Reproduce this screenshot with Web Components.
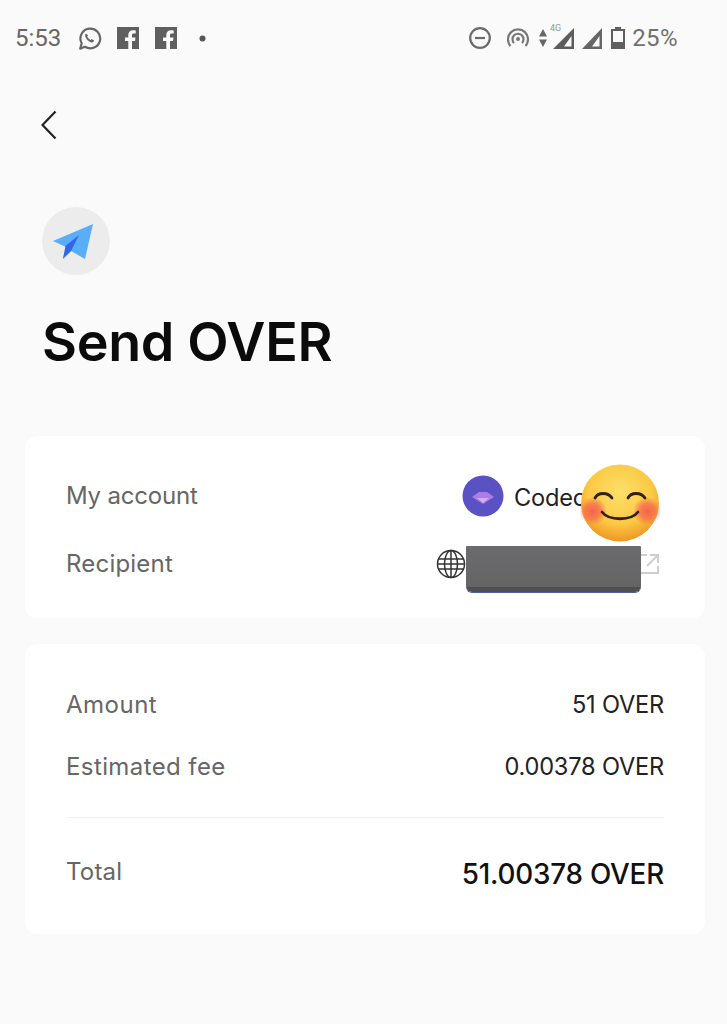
<!DOCTYPE html>
<html><head><meta charset="utf-8"><style>
html,body{margin:0;padding:0;background:#fafafa}
body{width:727px;height:1024px;overflow:hidden;font-family:Inter,"Liberation Sans",sans-serif}
</style></head><body>
<template id="t-status"><style>
:host{display:flex;align-items:center;height:40px;padding:18px 49px 0 15px;color:#666;font:400 24px/40px Roboto,sans-serif}
.l,.r{display:flex;align-items:center}
.r{margin-left:auto}
svg{display:block;flex:none}
</style>
<div class="l"><span>5:53</span>
<svg style="margin-left:16px" width="25" height="25" viewBox="0 0 25 25"><path d="M3.2 22.6l1.5-5.300A9.900 9.900 0 1 1 8 20.800z" fill="none" stroke="#666" stroke-width="2.200" stroke-linejoin="round"/><path d="M9 7.600c-1.400 1-1.200 3 .4 5.200 1.700 2.300 3.800 3.900 5.600 3.600 1.200-.2 2-1 2.100-2l-2.500-1.500-1 1.100c-1.400-.5-2.800-2-3.400-3.400l.9-1z" fill="#666"/></svg>
<svg style="margin-left:15px" width="22" height="22" viewBox="0 0 22 22"><path fill="#5f5f5f" d="M0 0h22v22H15v-8h3l.5-3.500H15V8.300c0-1 .4-1.700 1.800-1.700h1.900V3.400c-.9-.1-1.800-.2-2.700-.2-2.800 0-4.700 1.700-4.700 4.800v2.500H8V14h3.300v8H0z"/></svg>
<svg style="margin-left:16px" width="22" height="22" viewBox="0 0 22 22"><path fill="#5f5f5f" d="M0 0h22v22H15v-8h3l.5-3.500H15V8.300c0-1 .4-1.700 1.800-1.700h1.900V3.400c-.9-.1-1.800-.2-2.700-.2-2.800 0-4.700 1.700-4.700 4.800v2.500H8V14h3.300v8H0z"/></svg>
<svg style="margin-left:22px" width="7" height="7" viewBox="0 0 7 7"><circle cx="3.500" cy="3.500" r="3" fill="#555"/></svg>
</div>
<div class="r">
<svg width="22" height="22" viewBox="0 0 22 22"><circle cx="11" cy="11" r="9.800" fill="none" stroke="#6a6a6a" stroke-width="2.200"/><rect x="6" y="9.900" width="10" height="2.200" fill="#6a6a6a"/></svg>
<svg style="margin-left:16px" width="22" height="20" viewBox="0 0 22 20"><g fill="none" stroke="#777" stroke-width="2.200"><path d="M3.500 18a10 10 0 1 1 15 0"/><path d="M7 15a5.500 5.500 0 1 1 8 0"/></g><circle cx="11" cy="11" r="2" fill="#777"/></svg>
<svg style="margin-left:10px" width="8" height="20" viewBox="0 0 8 20"><path fill="#666" d="M4 1L8 8.500H0zM4 19L0 11.500h8z"/></svg>
<svg style="margin-left:6px" width="21" height="22" viewBox="0 0 21 22"><path d="M0 22L21 1v21zM11 19.500h7.500V9z" fill="#5d5d5d" fill-rule="evenodd"/></svg>
<svg style="margin-left:8px" width="20" height="22" viewBox="0 0 20 22"><path d="M0 22L20 1v21zM10 19.500h7.500V9z" fill="#666" fill-rule="evenodd"/></svg>
<svg style="margin-left:9px" width="14" height="22" viewBox="0 0 14 22"><path d="M4 0h6v2h4v20H0V2h4zM2 4v11h10V4z" fill="#5f5f5f" fill-rule="evenodd"/></svg>
<span style="margin-left:7px;letter-spacing:.4px;color:#707070">25%</span>
</div></template>

<template id="t-net"><style>
:host{position:absolute;left:550px;top:23px;font:400 9px/10px Roboto,sans-serif;color:#999}
</style><slot></slot></template>

<template id="t-back"><style>
:host{display:block;height:32px;margin:52px 0 0 41px}
svg{display:block}
</style><svg width="16" height="30" viewBox="0 0 16 30"><path d="M14.500 1.500L1.500 15l13 13.500" fill="none" stroke="#222" stroke-width="2.200"/></svg></template>

<template id="t-badge"><style>
:host{display:flex;align-items:center;justify-content:center;width:68px;height:68px;border-radius:50%;background:#ececec;margin:65px 0 0 42px}
</style><svg width="40" height="36" viewBox="0 0 40 36" style="display:block;margin:2px 6px 0 0"><path d="M40 0L0 17l13 6-3 12 8-8 14 8z" fill="#5aaef7"/><path d="M26 11L12.500 22 10 34.500l8-7.500z" fill="#2f66ea"/></svg></template>

<template id="t-title"><style>
:host{display:block;margin:32px 0 0 42px;font:600 53.800px/70px Inter,sans-serif;color:#0b0b0b;letter-spacing:-.3px}
</style><slot></slot></template>

<template id="t-card"><style>
:host{display:flex;flex-direction:column;margin:0 22px 0 25px;background:#fff;border-radius:12px;padding:var(--pad,0 40px 0 41px);box-shadow:0 0 3px rgba(0,0,0,.015);position:relative}
</style><slot></slot></template>

<template id="t-row"><style>
:host{display:flex;align-items:center;justify-content:space-between;height:var(--h,62px);font:400 24px/30px Inter,sans-serif;color:#666}
.lb{letter-spacing:var(--ls,0)}
.v{display:flex;align-items:center;color:var(--vc,#222);font-size:var(--vs,23.6px);font-weight:var(--vw,400);letter-spacing:-.2px;padding-top:var(--vt,0)}
</style><span class="lb"><slot name="label"></slot></span><span class="v"><slot></slot></span></template>

<template id="t-hr"><style>
:host{display:block;height:1px;background:#f1f1f1;margin:19px 0 21px}
</style></template>

<template id="t-sticker"><style>
:host{position:absolute;left:555px;top:28px;width:80px;height:78px;display:block}
svg{display:block}
</style><svg width="80" height="78" viewBox="0 0 80 78"><defs><radialGradient id="g" cx=".5" cy=".36" r=".66"><stop offset="0" stop-color="#fde06a"/><stop offset=".62" stop-color="#fbc944"/><stop offset="1" stop-color="#ee9222"/></radialGradient><radialGradient id="c"><stop offset="0" stop-color="#f5564f" stop-opacity=".9"/><stop offset=".55" stop-color="#f5564f" stop-opacity=".6"/><stop offset="1" stop-color="#f5564f" stop-opacity="0"/></radialGradient></defs><ellipse cx="40" cy="39" rx="39" ry="38.500" fill="url(#g)"/><circle cx="13" cy="47" r="14" fill="url(#c)"/><circle cx="67" cy="47" r="14" fill="url(#c)"/><g fill="none" stroke="#33200e" stroke-width="2.800" stroke-linecap="round"><path d="M15 34c3-6 13-6 17 0"/><path d="M48 34c3-6 13-6 17 0"/><path d="M22 48c7 9 29 9 36 0"/></g></svg></template>

<template id="t-redact"><style>
:host{position:absolute;left:441px;top:110px;width:175px;height:46px;display:block;background:linear-gradient(#6b6b6d,#656566 90%,#4f4f52 90%);border-radius:1px 1px 6px 6px;box-shadow:0 1px 0 #5060a0}
</style></template>

<script>
for (const n of ['status','net','back','badge','title','card','row','hr','sticker','redact']) {
  customElements.define('x-'+n, class extends HTMLElement {
    constructor(){super();this.attachShadow({mode:'open'}).appendChild(document.getElementById('t-'+n).content.cloneNode(true));}
  });
}
</script>

<x-status></x-status>
<x-net>4G</x-net>
<x-back></x-back>
<x-badge></x-badge>
<x-title>Send OVER</x-title>

<x-card style="margin-top:59px;height:182px;--pad:26px 45px 0 41px;box-sizing:border-box;--h:68px">
  <x-row style="--vt:3px;--ls:-.2px"><span slot="label">My account</span>
    <svg width="42" height="42" viewBox="0 0 42 42" style="display:block;margin:0 10px 3px 0"><circle cx="21" cy="21" r="20.500" fill="#5a52c4"/><path d="M10 22l7-5h8l7 5-11 7z" fill="#a97fe6"/><path d="M15 23h12l-6 5z" fill="#d8a9f2"/></svg>
    <span style="width:146px;overflow:hidden;white-space:nowrap">Codec</span>
  </x-row>
  <x-row style="--ls:.2px"><span slot="label">Recipient</span>
    <svg width="30" height="30" viewBox="0 0 30 30" style="display:block;margin-right:5px"><g fill="none" stroke="#333" stroke-width="1.500"><circle cx="15" cy="15" r="13.500"/><ellipse cx="15" cy="15" rx="6.500" ry="13.500"/><path d="M15 1.500v27M2.500 10h25M2.500 20h25M1.500 15h27"/></g></svg>
    <span style="width:171px"></span>
    <svg width="22" height="22" viewBox="0 0 22 22" style="display:block;margin-left:-4px"><path d="M9 2H2v18h18v-7M12 2h8v8M20 2L9 13" fill="none" stroke="#cfcfcf" stroke-width="2"/></svg>
  </x-row>
  <x-redact></x-redact>
  <x-sticker></x-sticker>
</x-card>

<x-card style="margin-top:26px;height:290px;--pad:30px 41px 0 41px;box-sizing:border-box;--h:62px">
  <x-row style="--ls:.5px"><span slot="label">Amount</span>51 OVER</x-row>
  <x-row style="--ls:.4px"><span slot="label">Estimated fee</span>0.00378 OVER</x-row>
  <x-hr></x-hr>
  <x-row style="--vc:#111;--vs:27.8px;--vw:500;--h:66px;--vt:3px;--ls:.2px"><span slot="label">Total</span>51.00378 OVER</x-row>
</x-card>
</body></html>
